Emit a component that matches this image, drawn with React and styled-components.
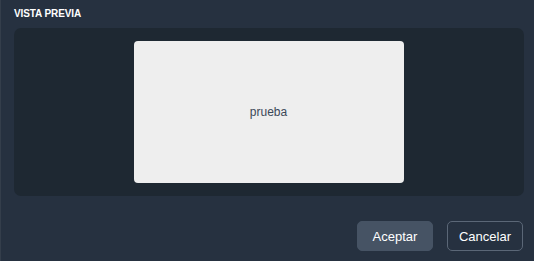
import React from 'react';
import styled, { createGlobalStyle } from 'styled-components';

const GlobalStyle = createGlobalStyle`
  html, body {
    margin: 0;
    padding: 0;
    background: #263140;
  }
  body {
    font-family: 'Liberation Sans', Arial, sans-serif;
  }
`;

function App() {
  return (
    <>
      <GlobalStyle />
      <Panel>
        <Title>VISTA PREVIA</Title>
        <PreviewArea>
          <PreviewCard>
            <PreviewText>prueba</PreviewText>
          </PreviewCard>
        </PreviewArea>
        <Footer>
          <Button primary>Aceptar</Button>
          <Button>Cancelar</Button>
        </Footer>
      </Panel>
    </>
  );
}
export default App;

const Panel = styled.div`
  width: 534px;
  height: 261px;
  box-sizing: border-box;
  background: #263140;
  border-left: 1px solid #343e4b;
  padding: 8px 10px 0 13px;
  display: flex;
  flex-direction: column;
`;
const Title = styled.h2`
  margin: 0;
  height: 12px;
  line-height: 12px;
  font-size: 10px;
  font-weight: 700;
  color: #ffffff;
  letter-spacing: -0.1px;
`;
const PreviewArea = styled.div`
  margin-top: 8px;
  height: 168px;
  background: #1e2832;
  border-radius: 7px;
  display: flex;
  align-items: center;
  justify-content: center;
`;
const PreviewCard = styled.div`
  width: 270px;
  height: 142px;
  background: #eeeeee;
  border-radius: 4px;
  display: flex;
  align-items: center;
  justify-content: center;
  margin-left: -1px;
`;
const PreviewText = styled.span`
  font-size: 12px;
  color: #3b4858;
`;
const Footer = styled.div`
  margin-top: 25px;
  margin-right: 1px;
  display: flex;
  justify-content: flex-end;
  gap: 14px;
`;
const Button = styled.button`
  width: 76px;
  height: 30px;
  box-sizing: border-box;
  border-radius: 5px;
  font-family: 'Liberation Sans', Arial, sans-serif;
  font-size: 13px;
  color: #ffffff;
  cursor: pointer;
  background: ${props => (props.primary ? '#465364' : 'transparent')};
  border: 1px solid ${props => (props.primary ? '#465364' : '#5b6777')};
`;
